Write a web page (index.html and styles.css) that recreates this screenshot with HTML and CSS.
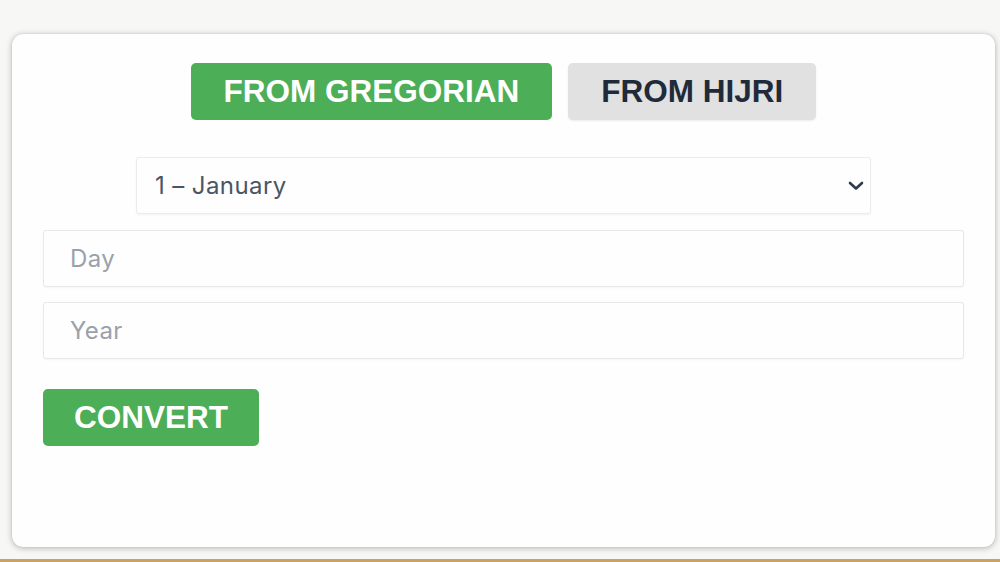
FILE: index.html
```html
<!DOCTYPE html>
<html lang="en">
<head>
<meta charset="utf-8">
<title>Date Converter</title>
<link rel="stylesheet" href="styles.css">
</head>
<body>
<main class="card">
  <div class="tabs">
    <button class="tab tab-active" type="button">FROM GREGORIAN</button>
    <button class="tab tab-inactive" type="button">FROM HIJRI</button>
  </div>
  <div class="select-wrap">
    <div class="select">
      <span class="select-value">1 – January</span>
      <svg class="chevron" width="16" height="10" viewBox="0 0 16 10" aria-hidden="true">
        <path d="M2 2 L8 7.5 L14 2" fill="none" stroke="#2d3a4b" stroke-width="2.6" stroke-linecap="round" stroke-linejoin="round"/>
      </svg>
    </div>
  </div>
  <input class="field field-day" type="text" placeholder="Day">
  <input class="field field-year" type="text" placeholder="Year">
  <div class="actions">
    <button class="convert" type="button">CONVERT</button>
  </div>
</main>
<div class="strip"></div>
</body>
</html>
```

FILE: styles.css
```css
* { box-sizing: border-box; }

html, body {
  margin: 0;
  padding: 0;
}

body {
  width: 1000px;
  height: 562px;
  overflow: hidden;
  background: #f7f7f6;
  display: flex;
  flex-direction: column;
  font-family: "Liberation Sans", Arial, sans-serif;
}

.card {
  margin: 34px 5px 0 12px;
  height: 513px;
  background: #fefefe;
  border-radius: 11px;
  box-shadow: 0 1px 6px rgba(0, 0, 0, 0.28), 0 0 1px rgba(0, 0, 0, 0.2);
  padding: 29px 31px 0 31px;
  display: flex;
  flex-direction: column;
}

.tabs {
  display: flex;
  justify-content: center;
  gap: 16px;
}

.tab {
  height: 57px;
  padding: 0 33px;
  border: none;
  border-radius: 5px;
  font-family: "Liberation Sans", Arial, sans-serif;
  font-weight: 700;
  font-size: 31.5px;
  line-height: 57px;
  cursor: pointer;
}

.tab-active {
  background: #4cae56;
  color: #ffffff;
}

.tab-inactive {
  background: #e1e1e1;
  color: #1f2b3a;
  box-shadow: 0 1px 2px rgba(0, 0, 0, 0.08);
}

.select-wrap {
  display: flex;
  justify-content: center;
  margin-top: 37px;
}

.select {
  width: 735px;
  height: 57px;
  border: 1px solid #ececec;
  border-radius: 3px;
  background: #fefefe;
  box-shadow: 0 1px 2px rgba(0, 0, 0, 0.05);
  display: flex;
  align-items: center;
  justify-content: space-between;
  padding: 0 6px 0 18px;
  font-family: Inter, "Noto Sans", sans-serif;
  font-size: 24px;
  letter-spacing: 0.4px;
  color: #4a5566;
}

.field {
  display: block;
  width: 100%;
  height: 57px;
  border: 1px solid #e8e8e8;
  border-radius: 3px;
  background: #fefefe;
  box-shadow: 0 1px 2px rgba(0, 0, 0, 0.04);
  padding: 0 26px;
  font-family: Inter, "Noto Sans", sans-serif;
  font-size: 24px;
  letter-spacing: 0.4px;
  color: #4a5566;
  outline: none;
}

.field::placeholder {
  color: #9aa1ab;
}

.field-day {
  margin-top: 16px;
}

.field-year {
  margin-top: 15px;
}

.actions {
  display: flex;
  margin-top: 30px;
}

.convert {
  height: 57px;
  padding: 0 31px;
  border: none;
  border-radius: 5px;
  background: #4cae56;
  color: #ffffff;
  font-family: "Liberation Sans", Arial, sans-serif;
  font-weight: 700;
  font-size: 31.5px;
  line-height: 57px;
  cursor: pointer;
}

.strip {
  margin-top: 12px;
  height: 3px;
  background: #c9a264;
}
```
